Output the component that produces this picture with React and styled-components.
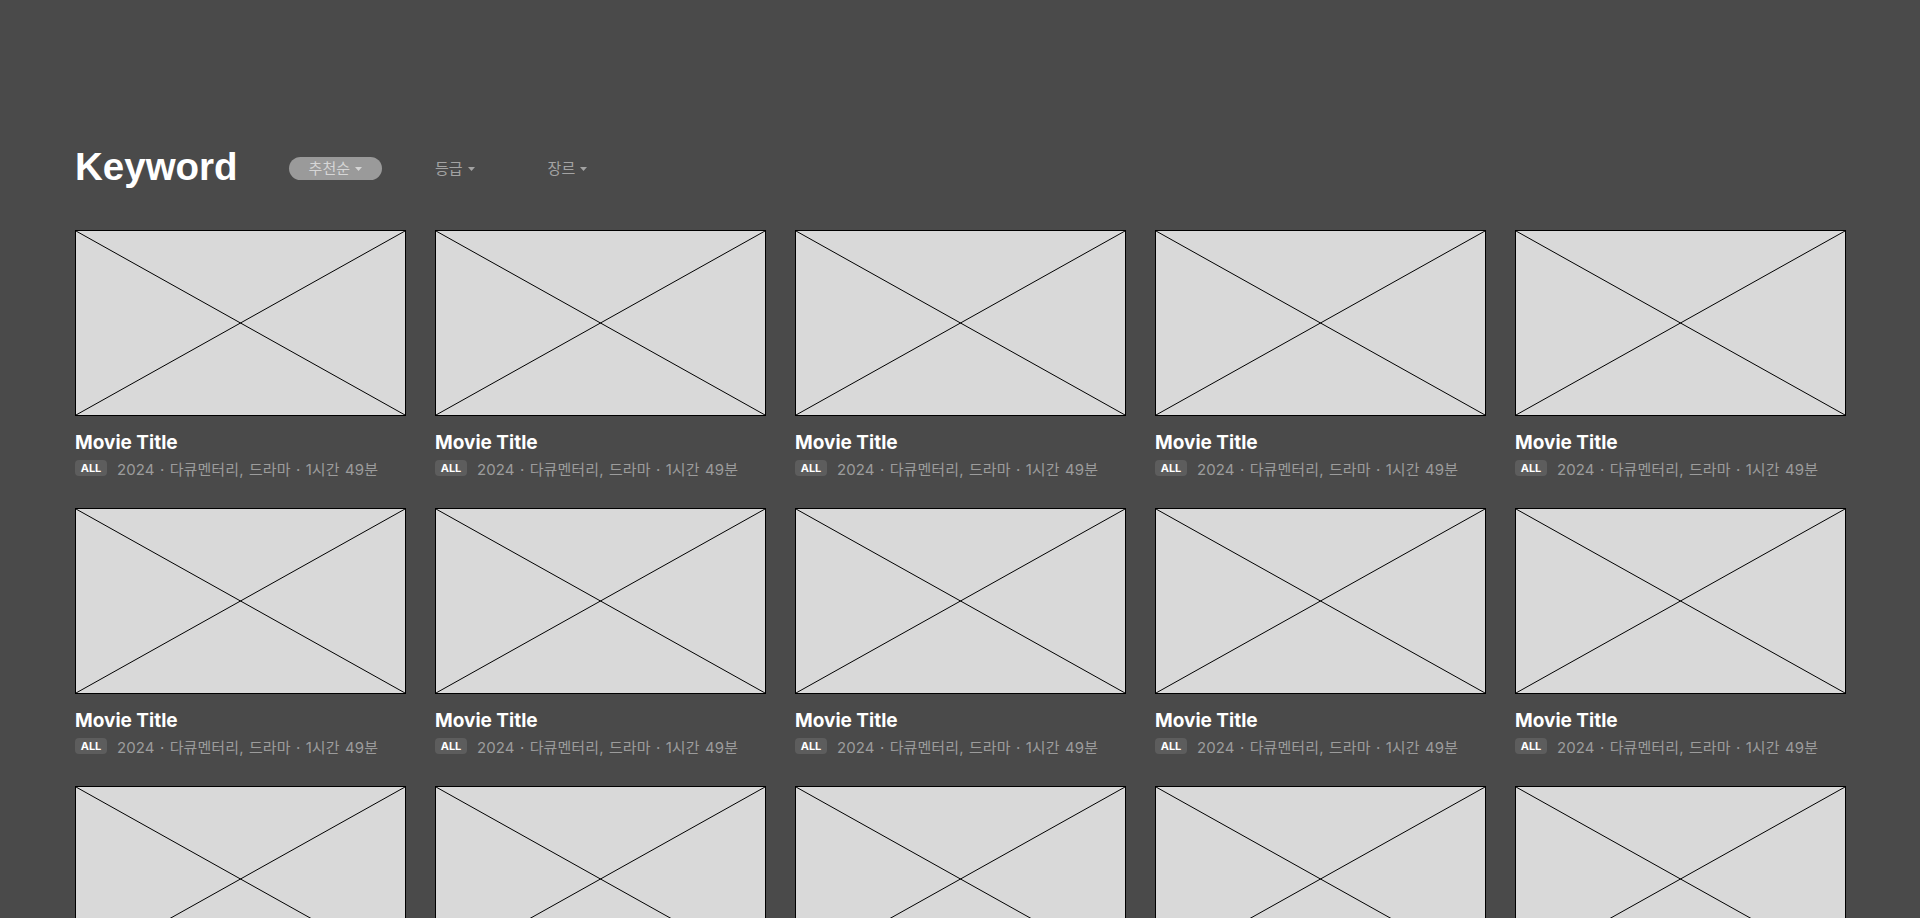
import styled, { createGlobalStyle } from "styled-components";

const GlobalStyle = createGlobalStyle`
  html, body {
    margin: 0;
    padding: 0;
    background: #4a4a4a;
  }
  body {
    font-family: Inter, "Noto Sans CJK KR", sans-serif;
  }
`;

const Page = styled.main`
  min-height: 100vh;
  background: #4a4a4a;
  padding: 142px 75px 0;
  box-sizing: border-box;
  overflow: hidden;
`;

const Header = styled.header`
  display: flex;
  align-items: center;
  height: 50px;
  margin-bottom: 38px;
`;

const Title = styled.h1`
  margin: 0 51px 0 0;
  font-family: "Liberation Sans", Arial, sans-serif;
  font-size: 38.5px;
  font-weight: 700;
  color: #ffffff;
  line-height: 1;
`;

const Filters = styled.div`
  display: flex;
  align-items: center;
  gap: 33px;
  padding-top: 3px;
`;

const FilterButton = styled.button`
  display: flex;
  align-items: center;
  gap: 5px;
  height: 23px;
  padding: 0 20px;
  border: none;
  border-radius: 12px;
  background: ${(p) => (p.active ? "#9a9a9a" : "transparent")};
  color: ${(p) => (p.active ? "#d6d6d6" : "#a3a3a3")};
  font-family: Inter, "Noto Sans CJK KR", sans-serif;
  font-size: 15px;
  line-height: 1;
  cursor: pointer;
`;

const Caret = styled.svg`
  width: 7px;
  height: 4px;
  fill: currentColor;
`;

const Grid = styled.section`
  display: grid;
  grid-template-columns: repeat(5, 330px);
  column-gap: 30px;
  row-gap: 30px;
`;

const Card = styled.article`
  display: flex;
  flex-direction: column;
`;

const Thumb = styled.div`
  width: 331px;
  height: 186px;
  box-sizing: border-box;
  border: 1px solid #000;
  background: #d9d9d9;
  svg {
    display: block;
    width: 100%;
    height: 100%;
  }
`;

const MovieTitle = styled.h2`
  margin: 16px 0 0;
  font-family: Inter, "Noto Sans CJK KR", sans-serif;
  font-size: 19px;
  font-weight: 700;
  line-height: 22px;
  color: #ffffff;
`;

const Meta = styled.div`
  display: flex;
  align-items: center;
  gap: 10px;
  margin-top: 4px;
  height: 20px;
`;

const Badge = styled.span`
  display: inline-flex;
  align-items: center;
  justify-content: center;
  width: 32px;
  height: 16px;
  border-radius: 4px;
  background: #5d5d5d;
  color: #ffffff;
  font-family: Inter, sans-serif;
  font-size: 11px;
  font-weight: 700;
`;

const MetaText = styled.span`
  font-family: Inter, "Noto Sans CJK KR", sans-serif;
  font-size: 15px;
  letter-spacing: 0.1px;
  word-spacing: 1px;
  color: #9c9c9c;
  white-space: nowrap;
`;

function Placeholder() {
  return (
    <Thumb>
      <svg viewBox="0 0 100 100" preserveAspectRatio="none">
        <line x1="0" y1="0" x2="100" y2="100" stroke="#000" strokeWidth="1" vectorEffect="non-scaling-stroke" />
        <line x1="100" y1="0" x2="0" y2="100" stroke="#000" strokeWidth="1" vectorEffect="non-scaling-stroke" />
      </svg>
    </Thumb>
  );
}

const filters = [
  { label: "추천순", active: true },
  { label: "등급", active: false },
  { label: "장르", active: false },
];

const movies = Array.from({ length: 15 }, (_, i) => ({
  id: i,
  title: "Movie Title",
  rating: "ALL",
  info: "2024 · 다큐멘터리, 드라마 · 1시간 49분",
}));

export default function App() {
  return (
    <>
      <GlobalStyle />
      <Page>
        <Header>
          <Title>Keyword</Title>
          <Filters>
            {filters.map((f) => (
              <FilterButton key={f.label} active={f.active}>
                {f.label}
                <Caret viewBox="0 0 7 4">
                  <path d="M0 0h7L3.5 4z" />
                </Caret>
              </FilterButton>
            ))}
          </Filters>
        </Header>
        <Grid>
          {movies.map((m) => (
            <Card key={m.id}>
              <Placeholder />
              <MovieTitle>{m.title}</MovieTitle>
              <Meta>
                <Badge>{m.rating}</Badge>
                <MetaText>{m.info}</MetaText>
              </Meta>
            </Card>
          ))}
        </Grid>
      </Page>
    </>
  );
}
